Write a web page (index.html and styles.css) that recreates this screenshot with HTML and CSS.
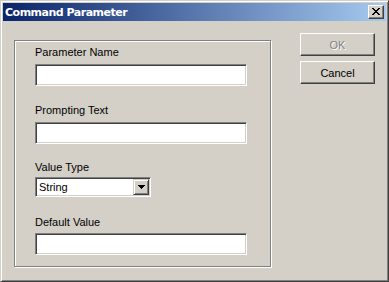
FILE: index.html
```html
<!DOCTYPE html>
<html lang="en">
<head>
  <meta charset="UTF-8" />
  <title>Command Parameter</title>
  <link rel="stylesheet" href="styles.css">
</head>
<body>
  <div class="window">
    <div class="titlebar">
      <span class="title">Command Parameter</span>
      <button class="close-btn" aria-label="Close">
        <svg width="8" height="7" viewBox="0 0 8 7" shape-rendering="crispEdges">
          <path d="M0 0h2v1h-2z M6 0h2v1h-2z M1 1h2v1h-2z M5 1h2v1h-2z M2 2h4v1h-4z M3 3h2v1h-2z M2 4h4v1h-4z M1 5h2v1h-2z M5 5h2v1h-2z M0 6h2v1h-2z M6 6h2v1h-2z" fill="#000"/>
        </svg>
      </button>
    </div>

    <div class="client">
      <div class="group">
        <label class="field-label label-name">Parameter Name</label>
        <div class="edit"></div>

        <label class="field-label label-prompt">Prompting Text</label>
        <div class="edit"></div>

        <label class="field-label label-type">Value Type</label>
        <div class="combo">
          <span class="combo-text">String</span>
          <span class="combo-btn">
            <svg width="7" height="4" viewBox="0 0 7 4" shape-rendering="crispEdges">
              <path d="M0 0h7v1h-7z M1 1h5v1h-5z M2 2h3v1h-3z M3 3h1v1h-1z" fill="#000"/>
            </svg>
          </span>
        </div>

        <label class="field-label label-default">Default Value</label>
        <div class="edit"></div>
      </div>

      <div class="buttons">
        <button class="push-btn disabled">OK</button>
        <button class="push-btn">Cancel</button>
      </div>
    </div>
  </div>
</body>
</html>
```

FILE: styles.css
```css
:root {
  --face: #d4d0c8;
  --shadow: #808080;
  --dark: #404040;
  --light: #fff;
}

html, body {
  margin: 0;
  padding: 0;
}

body {
  width: 389px;
  height: 282px;
  overflow: hidden;
  font-family: 'Liberation Sans', Arial, sans-serif;
  font-size: 11px;
  color: #000;
}

.window {
  box-sizing: border-box;
  width: 389px;
  height: 282px;
  background: var(--face);
  border: 1px solid;
  border-color: var(--face) var(--dark) var(--dark) var(--face);
  box-shadow: inset 1px 1px var(--light), inset -1px -1px var(--shadow);
  padding: 2px;
  display: flex;
  flex-direction: column;
}

.titlebar {
  height: 18px;
  flex: none;
  background: linear-gradient(to right, #0a246a, #a6caf0);
  display: flex;
  align-items: center;
  justify-content: space-between;
  padding: 0 2px 0 2px;
}

.title {
  color: #fff;
  font-family: 'DejaVu Sans', sans-serif;
  font-weight: bold;
  font-size: 11px;
  letter-spacing: -0.5px;
}

.close-btn {
  box-sizing: border-box;
  width: 16px;
  height: 14px;
  padding: 0;
  background: var(--face);
  border: 1px solid;
  border-color: var(--light) var(--dark) var(--dark) var(--light);
  box-shadow: inset -1px -1px var(--shadow);
  display: flex;
  align-items: center;
  justify-content: center;
}

.close-btn svg {
  display: block;
  margin: 0 1px 1px 0;
}

.client {
  display: flex;
  padding: 12px 0 0 11px;
}

.group {
  box-sizing: border-box;
  width: 257px;
  height: 227px;
  margin-top: 7px;
  border: 1px solid var(--shadow);
  box-shadow: inset 1px 1px var(--light), 1px 1px var(--light);
  padding: 5px 0 0 20px;
  display: flex;
  flex-direction: column;
  align-items: flex-start;
}

.field-label {
  display: block;
  line-height: 13px;
  height: 13px;
}

.label-prompt { margin-top: 18px; }
.label-type { margin-top: 17px; }
.label-default { margin-top: 19px; }

.edit {
  box-sizing: border-box;
  width: 212px;
  height: 22px;
  margin-top: 5px;
  background: #fff;
  border: 1px solid;
  border-color: var(--shadow) var(--light) var(--light) var(--shadow);
  box-shadow: inset 1px 1px var(--dark), inset -1px -1px var(--face);
}

.label-default + .edit { margin-top: 4px; }

.combo {
  box-sizing: border-box;
  width: 116px;
  height: 20px;
  margin-top: 3px;
  background: #fff;
  border: 1px solid;
  border-color: var(--shadow) var(--light) var(--light) var(--shadow);
  box-shadow: inset 1px 1px var(--dark), inset -1px -1px var(--face);
  padding: 1px 1px 1px 2px;
  display: flex;
  align-items: center;
  justify-content: space-between;
}

.combo-text {
  padding-left: 1px;
  line-height: 13px;
}

.combo-btn {
  box-sizing: border-box;
  width: 16px;
  height: 16px;
  background: var(--face);
  border: 1px solid;
  border-color: var(--face) var(--dark) var(--dark) var(--face);
  box-shadow: inset 1px 1px var(--light), inset -1px -1px var(--shadow);
  display: flex;
  align-items: center;
  justify-content: center;
}

.combo-btn svg {
  display: block;
}

.buttons {
  margin-left: 29px;
  display: flex;
  flex-direction: column;
  gap: 5px;
}

.push-btn {
  box-sizing: border-box;
  width: 75px;
  height: 23px;
  padding: 0;
  font-family: 'Liberation Sans', Arial, sans-serif;
  font-size: 11px;
  color: #000;
  background: var(--face);
  border: 1px solid;
  border-color: var(--light) var(--dark) var(--dark) var(--light);
  box-shadow: inset -1px -1px var(--shadow);
}

.push-btn.disabled {
  color: var(--shadow);
  text-shadow: 1px 1px var(--light);
}
```
